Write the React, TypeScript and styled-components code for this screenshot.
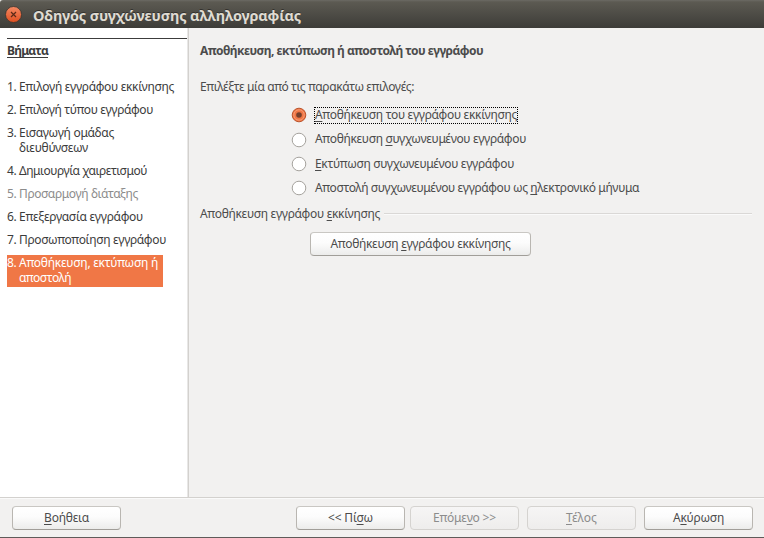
import React, { useLayoutEffect, useRef, useState } from "react";
import styled, { createGlobalStyle, css } from "styled-components";

const Global = createGlobalStyle`
  * { box-sizing: border-box; }
  body { margin: 0; background: #f2f1f0; }
`;

const Dialog = styled.div`
  width: 764px;
  height: 538px;
  display: flex;
  flex-direction: column;
  overflow: hidden;
  background: #f2f1f0;
  color: #4c4c4c;
  font: 12px/15px "Noto Sans", "Open Sans", sans-serif;
`;

const TitleBar = styled.header`
  height: 28px;
  flex: none;
  display: flex;
  align-items: center;
  padding: 1px 0 0 5px;
  gap: 12px;
  background: linear-gradient(#6b6a64 0, #5c5a52 2px, #3d3c38 100%);
  border-radius: 3px 0 0 0;
  color: #dfdbd2;
  font-size: 14.5px;
  font-weight: 700;
  line-height: 20px;
  text-shadow: 0 -1px 0 #33322e;
`;

const CloseButton = styled.button`
  width: 16px;
  height: 16px;
  padding: 0;
  border: 0;
  background: none;
  display: flex;
  svg { display: block; overflow: visible; }
`;

const Body = styled.main`
  height: 469px;
  flex: none;
  display: flex;
`;

const Sidebar = styled.aside`
  width: 187px;
  flex: none;
  background: #fff;
  color: #3c3c3c;
  padding: 10px 0 0 7px;
`;

const SidebarTitle = styled.h2`
  margin: 0 0 13px;
  border-top: 1px solid #3c3c3c;
  padding-top: 4px;
  height: 28px;
  font-size: 12px;
  line-height: 15px;
  font-weight: 700;
`;

const TitleText = styled.span`
  display: inline-block;
  height: 14px;
  line-height: 14px;
  border-bottom: 1px solid #3c3c3c;
`;

const Steps = styled.ol`
  list-style: none;
  margin: 0;
  padding: 0;
  display: flex;
  flex-direction: column;
  gap: 7px;
`;

const Step = styled.li<{ $state?: "active" | "disabled" }>`
  display: flex;
  width: 174px;
  padding-bottom: 1px;
  line-height: 15px;
  ${p => p.$state === "disabled" && css`color: #8c8c8c;`}
  ${p => p.$state === "active" && css`
    width: 156px;
    height: 32px;
    background: #f07746;
    color: #fff;
  `}
`;

const StepNumber = styled.span`
  width: 12px;
  flex: none;
  letter-spacing: -0.4px;
`;

const StepLines = styled.span`
  display: flex;
  flex-direction: column;
  align-items: flex-start;
`;

const Divider = styled.div`
  width: 2px;
  flex: none;
  background: linear-gradient(90deg, #e8e7e6 50%, #d3d1ce 50%);
`;

const Content = styled.section`
  flex: 1;
  padding: 15px 12px 0 11px;
`;

const Heading = styled.h1`
  margin: 0 0 21px;
  font-size: 12px;
  line-height: 15px;
  font-weight: 700;
`;

const Prompt = styled.p`
  margin: 0;
`;

const Options = styled.div`
  display: grid;
  grid-template-rows: 24px 25px 24px 24px;
  margin: 9px 0 0 91px;
`;

const Option = styled.label`
  display: flex;
  align-items: center;
  gap: 7px;
  svg { flex: none; display: block; }
`;

const OptionText = styled.span<{ $focused?: boolean }>`
  height: 17px;
  padding: 0 1px 2px;
  line-height: 15px;
  display: flex;
  ${p => p.$focused && css`outline: 1px dotted #000; outline-offset: -1px;`}
`;

const Group = styled.div`
  display: flex;
  align-items: center;
  gap: 4px;
  margin-top: 6px;
  &::after {
    content: "";
    flex: 1;
    height: 2px;
    background: linear-gradient(#dad8d6 50%, #fafafa 50%);
  }
`;

const Button = styled.button<{ $width: number }>`
  width: ${p => p.$width}px;
  height: 24px;
  padding: 0 0 2px;
  border: 1px solid #b9b6b1;
  border-top-color: #c9c7c3;
  border-bottom-color: #a19e99;
  border-radius: 4px;
  background: linear-gradient(#fff, #fcfcfc 45%, #ececeb);
  color: #4c4c4c;
  font: inherit;
  display: flex;
  align-items: center;
  justify-content: center;
  &:disabled {
    color: #8c8c8c;
    border-color: #d5d3d0;
    background: linear-gradient(#f6f5f5, #eeedec);
  }
`;

const SaveRow = styled.div`
  padding: 11px 0 0 110px;
`;

const Footer = styled.footer`
  height: 40px;
  flex: none;
  display: flex;
  gap: 8px;
  padding: 8px 11px 0 12px;
  border-top: 1px solid #d3d1ce;
  box-shadow: inset 0 1px #fafafa;
`;

const StepButtons = styled.div`
  display: flex;
  gap: 5px;
  margin-left: auto;
`;

const BottomEdge = styled.div`
  height: 1px;
  flex: none;
  background: #5f5b59;
`;

const Key = styled.span`
  text-decoration: underline;
  text-decoration-thickness: 1px;
  text-underline-offset: 2px;
  text-decoration-skip-ink: none;
`;

const Measured = styled.span`
  display: inline-block;
  white-space: pre;
`;

/* Tracks a label so that it takes up the given number of pixels. The mnemonic
   letter is marked with an underscore in front of it. */
function Label({ text, width }: { text: string; width: number }) {
  const ref = useRef<HTMLSpanElement>(null);
  const [spacing, setSpacing] = useState(0);
  const at = text.indexOf("_");
  useLayoutEffect(() => {
    const count = text.replace("_", "").length;
    const natural = ref.current!.getBoundingClientRect().width;
    setSpacing((width - natural) / count);
  }, [text, width]);
  return (
    <Measured ref={ref} style={{ letterSpacing: spacing }}>
      {at < 0 ? text : <>{text.slice(0, at)}<Key>{text[at + 1]}</Key>{text.slice(at + 2)}</>}
    </Measured>
  );
}

function CloseIcon() {
  return (
    <svg width="16" height="16" viewBox="0 0 16 16">
      <defs>
        <linearGradient id="close" x1="0" y1="0" x2="0" y2="1">
          <stop offset="0" stopColor="#f58a64" />
          <stop offset="1" stopColor="#df4f20" />
        </linearGradient>
      </defs>
      <circle cx="8.5" cy="7.5" r="8" fill="url(#close)" stroke="#37342e" strokeWidth="0.8" />
      <path d="M6 5 11 10M11 5 6 10" stroke="#5b2a18" strokeWidth="1.2" />
    </svg>
  );
}

function RadioIcon({ checked }: { checked?: boolean }) {
  return (
    <svg width="16" height="16" viewBox="0 0 16 16">
      {checked ? (
        <>
          <circle cx="8" cy="8" r="6.8" fill="#f07746" stroke="#b9532c" />
          <circle cx="8" cy="8" r="5.2" fill="none" stroke="#f69a74" />
          <circle cx="8" cy="8" r="2.8" fill="#75402d" />
        </>
      ) : (
        <circle cx="8" cy="8" r="6.8" fill="#fff" stroke="#a5a29d" />
      )}
    </svg>
  );
}

type StepData = { lines: [string, number][]; state?: "active" | "disabled" };

const steps: StepData[] = [
  { lines: [["Επιλογή εγγράφου εκκίνησης", 155]] },
  { lines: [["Επιλογή τύπου εγγράφου", 134]] },
  { lines: [["Εισαγωγή ομάδας", 95], ["διευθύνσεων", 69]] },
  { lines: [["Δημιουργία χαιρετισμού", 128]] },
  { lines: [["Προσαρμογή διάταξης", 119]], state: "disabled" },
  { lines: [["Επεξεργασία εγγράφου", 124]] },
  { lines: [["Προσωποποίηση εγγράφου", 147]] },
  { lines: [["Αποθήκευση, εκτύπωση ή", 139], ["αποστολή", 52]], state: "active" },
];

const options: [string, number][] = [
  ["_Αποθήκευση του εγγράφου εκκίνησης", 202],
  ["Αποθήκευση _συγχωνευμένου εγγράφου", 211],
  ["_Εκτύπωση συγχωνευμένου εγγράφου", 199],
  ["Αποστολή συγχωνευμένου εγγράφου ως _ηλεκτρονικό μήνυμα", 324],
];

export default function App() {
  return (
    <>
      <Global />
      <Dialog>
        <TitleBar>
          <CloseButton aria-label="Κλείσιμο"><CloseIcon /></CloseButton>
          <Label text="Οδηγός συγχώνευσης αλληλογραφίας" width={268} />
        </TitleBar>
        <Body>
          <Sidebar>
            <SidebarTitle><TitleText><Label text="Βήματα" width={41} /></TitleText></SidebarTitle>
            <Steps>
              {steps.map((step, i) => (
                <Step key={i} $state={step.state}>
                  <StepNumber>{i + 1}.</StepNumber>
                  <StepLines>
                    {step.lines.map(([text, width]) => <Label key={text} text={text} width={width} />)}
                  </StepLines>
                </Step>
              ))}
            </Steps>
          </Sidebar>
          <Divider />
          <Content>
            <Heading><Label text="Αποθήκευση, εκτύπωση ή αποστολή του εγγράφου" width={283} /></Heading>
            <Prompt><Label text="Επιλέξτε μία από τις παρακάτω επιλογές:" width={214} /></Prompt>
            <Options>
              {options.map(([text, width], i) => (
                <Option key={text}>
                  <RadioIcon checked={i === 0} />
                  <OptionText $focused={i === 0}><Label text={text} width={width} /></OptionText>
                </Option>
              ))}
            </Options>
            <Group><Label text="Αποθήκευση εγγράφου _εκκίνησης" width={180} /></Group>
            <SaveRow>
              <Button $width={221}><Label text="Αποθήκευση _εγγράφου εκκίνησης" width={180} /></Button>
            </SaveRow>
          </Content>
        </Body>
        <Footer>
          <Button $width={109}><Label text="_Βοήθεια" width={45} /></Button>
          <StepButtons>
            <Button $width={109}><Label text="<< Πί_σω" width={45} /></Button>
            <Button $width={109} disabled><Label text="Επόμε_νο >>" width={63} /></Button>
          </StepButtons>
          <Button $width={109} disabled><Label text="_Τέλος" width={31} /></Button>
          <Button $width={109}><Label text="Α_κύρωση" width={51} /></Button>
        </Footer>
        <BottomEdge />
      </Dialog>
    </>
  );
}
